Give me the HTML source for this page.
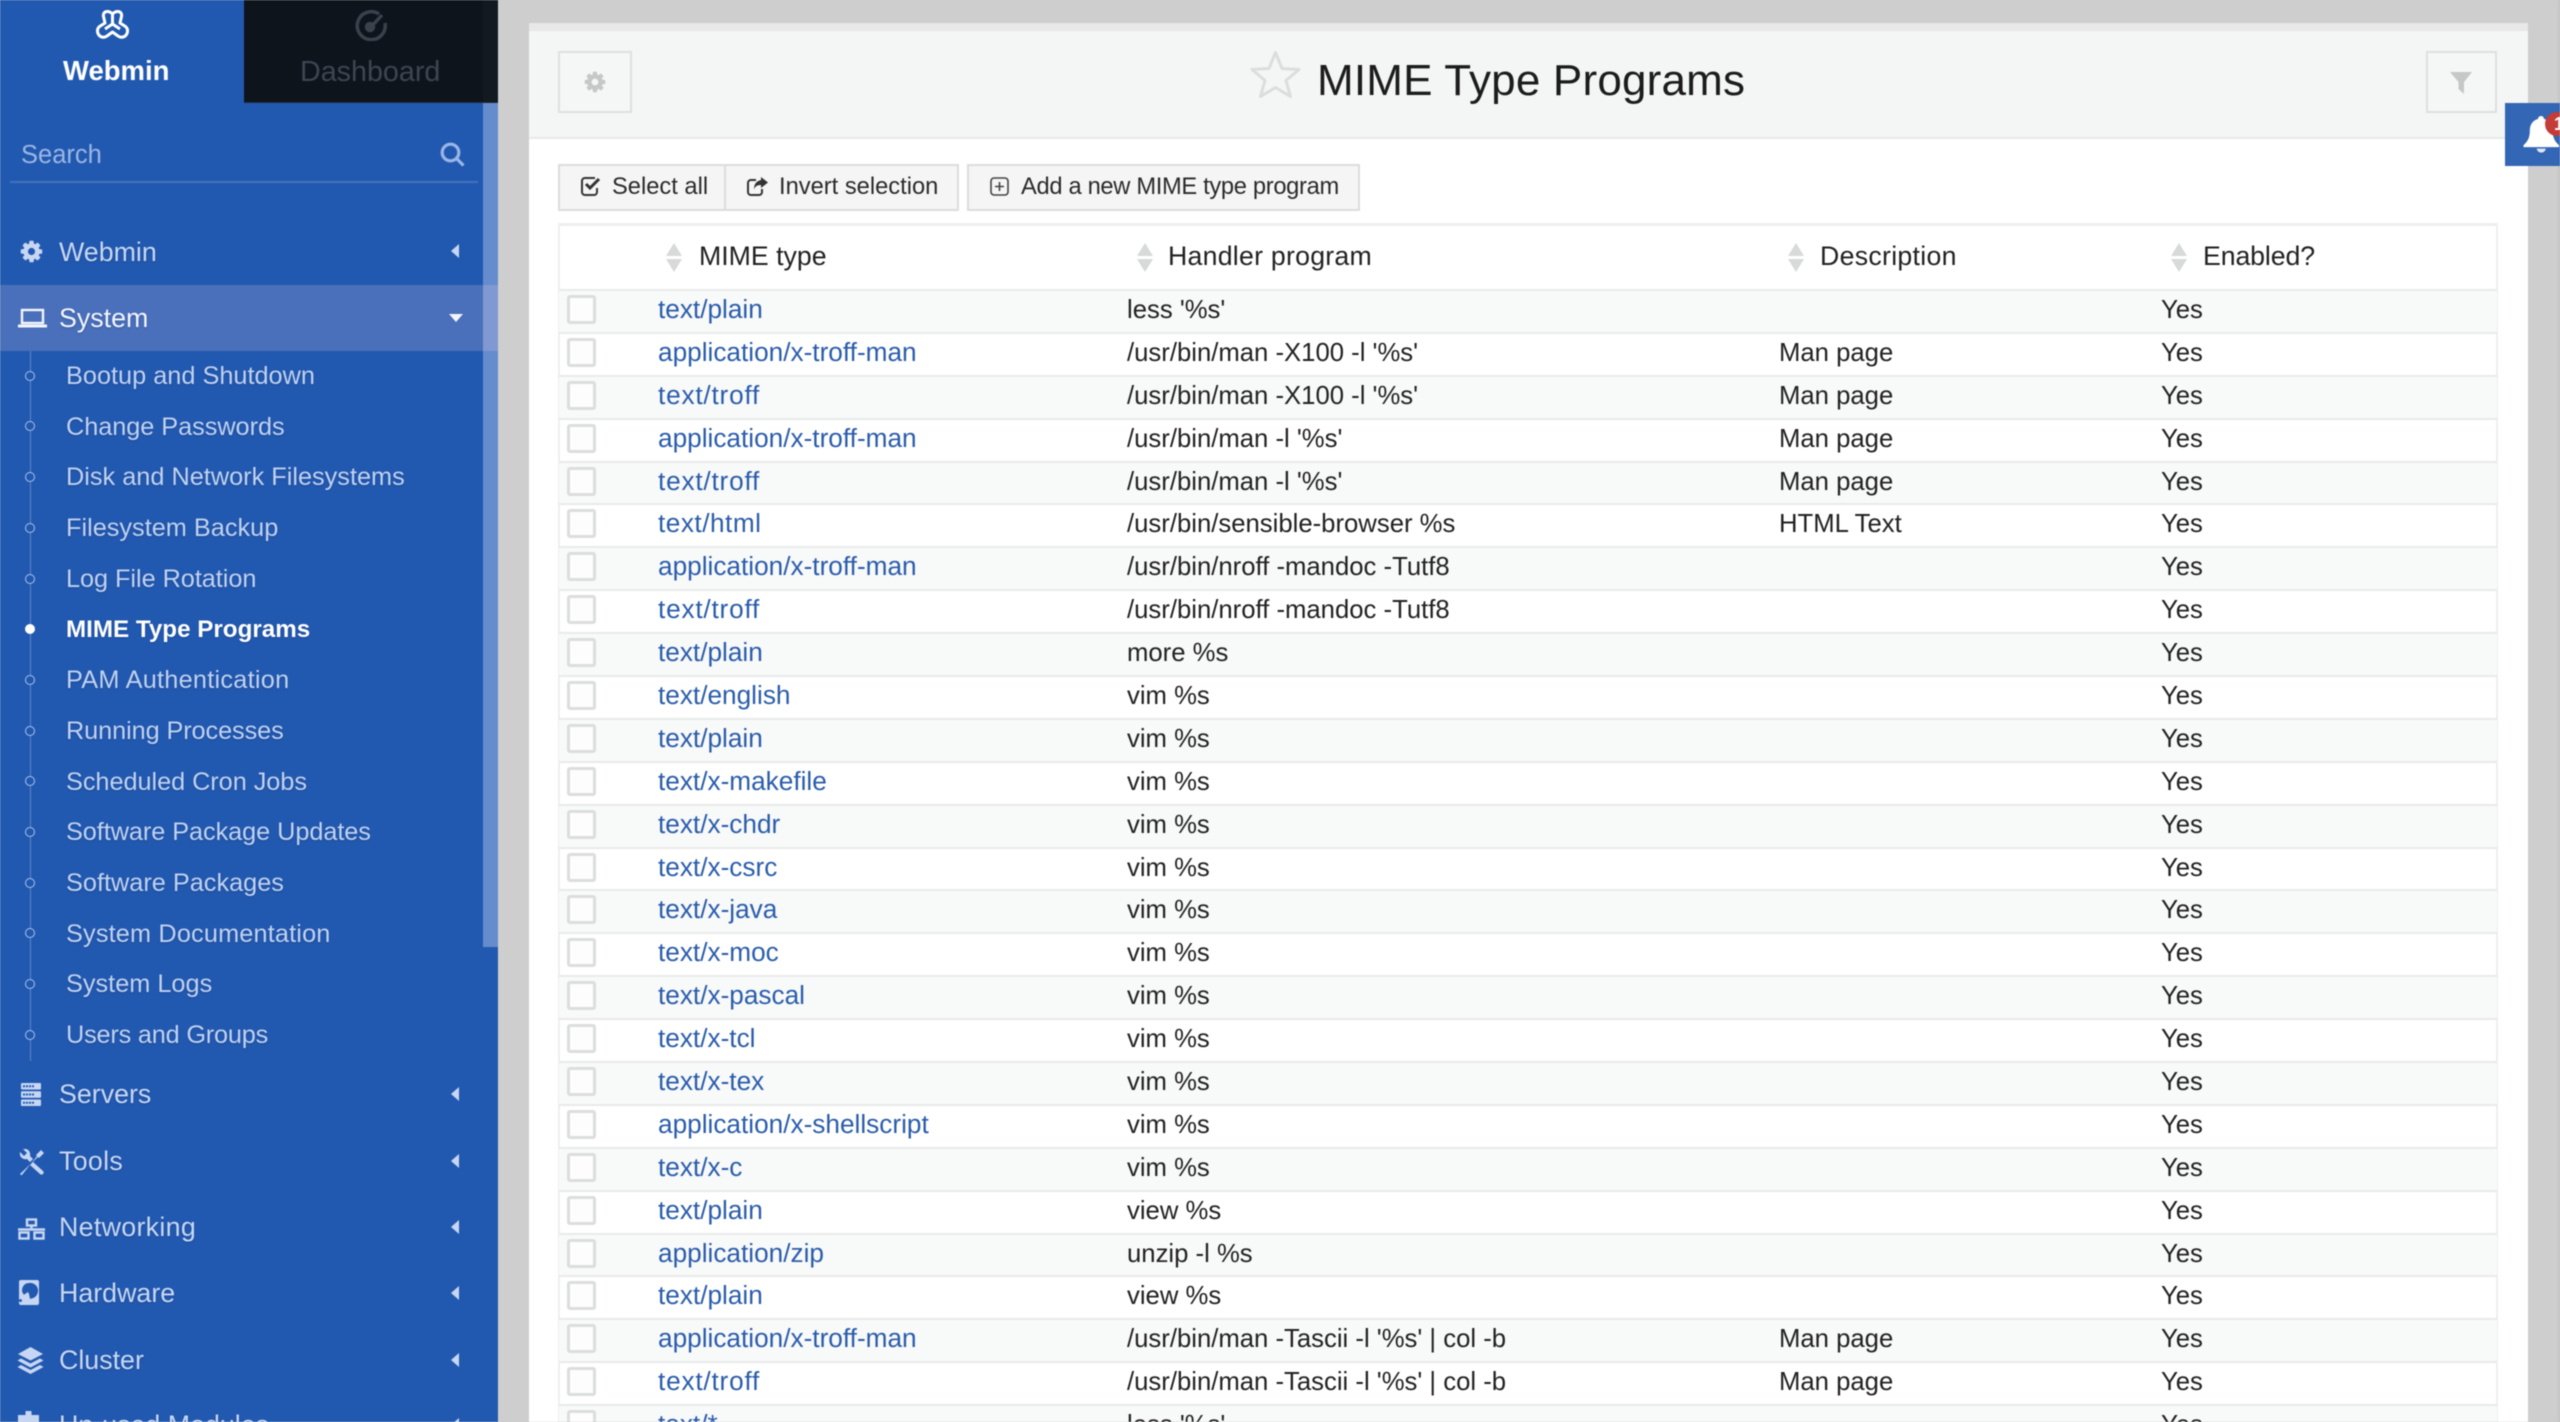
<!DOCTYPE html>
<html>
<head>
<meta charset="utf-8">
<style>
html,body{margin:0;padding:0;width:2560px;height:1422px;overflow:hidden;background:#cdcecd}
*{box-sizing:border-box}
#w{position:absolute;left:0;top:0;width:2560px;height:1422px;overflow:hidden;filter:blur(.45px);font-family:"Liberation Sans",sans-serif;background:#cdcecd}
.a{position:absolute;white-space:nowrap}
#side{position:absolute;left:0;top:0;width:498px;height:1422px;background:#2259b0;overflow:hidden}
#sb{position:absolute;left:483px;top:103px;width:15px;height:844px;background:#658ccd}
.mi{position:absolute;left:59px;font-size:26.8px;line-height:40px;height:40px;color:#c7d7f3;white-space:nowrap;text-shadow:0 1px 2px rgba(10,30,80,.25)}
.si{position:absolute;left:66px;font-size:25.3px;line-height:40px;height:40px;color:#c0d2f1;white-space:nowrap;text-shadow:0 1px 2px rgba(10,30,80,.25)}
.ic{position:absolute;fill:#c7d7f3}
.ar{position:absolute;left:451px;width:0;height:0;border-top:7px solid transparent;border-bottom:7px solid transparent;border-right:8px solid #c7d7f3}
.dot{position:absolute;left:25px;width:10px;height:10px;border-radius:50%;border:1.5px solid #a9c0ea;background:#2259b0}
#panel{position:absolute;left:529px;top:31px;width:1999px;height:1391px;background:#fff}
#top{position:absolute;left:529px;top:23px;width:1999px;height:8px;background:#e7e8e7}
#hdr{position:absolute;left:529px;top:31px;width:1999px;height:108px;background:#f4f5f5;border-bottom:2px solid #e8e9e9}
.bx{position:absolute;top:51px;height:62px;border:2px solid #dfe0e0;background:#f5f6f6}
.btn{position:absolute;top:164px;height:47px;background:#f5f5f5;border:2px solid #dcdcdc;font-size:23.7px;line-height:42px;color:#2b2b2b;white-space:nowrap}
#tb{position:absolute;left:558px;top:223px;width:1940px;height:1199px;border:2px solid #eeefef;border-top-width:3px;background:#fff}
.th{position:absolute;top:241px;font-size:26.7px;line-height:30px;color:#222;white-space:nowrap}
.so{position:absolute;top:243px;width:16px;height:29px}
#rows{position:absolute;left:559px;top:289px;width:1938px}
#rows div{position:relative;height:42.9px;border-top:2px solid #e9eaea;white-space:nowrap;font-size:25.7px;color:#222}
#rows div:nth-child(odd){background:#f8f9f9}
#rows i{position:absolute;left:8px;top:4px;width:29px;height:29px;border:3px solid #dcdddd;border-radius:3px;background:#fdfdfd}
#rows a,#rows b,#rows u,#rows s{position:absolute;top:0;line-height:39px;font-weight:normal;text-decoration:none}
#rows a{left:99px;color:#2a5cab;font-size:26.2px;line-height:37px}
#rows a.t{letter-spacing:.8px}
#rows a.h{letter-spacing:.5px}
#rows b{left:568px}
#rows u{left:1220px}
#rows s{left:1602px}
#bell{position:absolute;left:2505px;top:103px;width:55px;height:63px;background:#3366b4;overflow:hidden}
</style>
</head>
<body>
<div id="w">
<div id="panel"></div>
<div id="top"></div>
<div id="hdr"></div>
<div class="a" style="left:2558px;top:0;width:2px;height:1422px;background:#c4c5c4"></div>

<div class="bx" style="left:558px;width:74px"></div>
<svg class="a" style="left:583px;top:70px" width="24" height="24" viewBox="0 0 1792 1792" fill="#c6c7c7"><path d="M1152 896q0-106-75-181t-181-75-181 75-75 181 75 181 181 75 181-75 75-181zm512-109v222q0 12-8 23t-20 13l-185 28q-19 54-39 91 35 50 107 138 10 12 10 25t-9 23q-27 37-99 108t-94 71q-12 0-26-9l-138-108q-44 23-91 38-16 136-29 186-7 28-36 28h-222q-14 0-24.5-8.5t-11.5-21.5l-28-184q-49-16-90-37l-141 107q-10 9-25 9-14 0-25-11-126-114-165-168-7-10-7-23 0-12 8-23 15-21 51-66.5t54-70.5q-27-50-41-99l-183-27q-13-2-21-12.5t-8-23.5v-222q0-12 8-23t19-13l186-28q14-46 39-92-40-57-107-138-10-12-10-24 0-10 9-23 26-36 98.5-107.5t94.5-71.5q13 0 26 10l138 107q44-23 91-38 16-136 29-186 7-28 36-28h222q14 0 24.5 8.5t11.5 21.5l28 184q49 16 90 37l142-107q9-9 24-9 13 0 25 10 129 119 165 170 7 8 7 22 0 12-8 23-15 21-51 66.5t-54 70.5q26 50 41 98l183 28q13 2 21 12.5t8 23.5z"/></svg>
<svg class="a" style="left:1249px;top:49px" width="53" height="50" viewBox="0 0 53 50"><path d="M26.5 3.5 33 19.5 50 20.5 37 31.5 41.5 47.5 26.5 38.5 11.5 47.5 16 31.5 3 20.5 20 19.5Z" fill="none" stroke="#dcdddd" stroke-width="3" stroke-linejoin="round"/></svg>
<div class="a" style="left:1317px;top:54px;font-size:44px;letter-spacing:.2px;line-height:54px;color:#1c1c1c">MIME Type Programs</div>
<div class="bx" style="left:2426px;width:71px"></div>
<svg class="a" style="left:2449px;top:71px" width="24" height="24" viewBox="0 0 24 24" fill="#c6c7c7"><path d="M1 1H23L15 11V23L9.500 18V11Z"/></svg>

<div id="bell">
<svg class="a" style="left:18px;top:13px" width="37" height="37" viewBox="0 0 37 38" fill="#fff"><path d="M18 0c2 0 3 1.500 3 3 6 1.500 9 6 9 12 0 7 2 11 6.500 15v2H0v-2c4.500-4 6.500-8 6.500-15 0-6 3-10.500 8.500-12 0-1.500 1-3 3-3z"/><path d="M13.500 33.500a4.800 4.800 0 0 0 9.500 0z" fill="#dfe6f2"/></svg>
<div class="a" style="left:40px;top:9px;width:24px;height:24px;border-radius:50%;background:#c43c38;color:#fff;font-size:18px;font-weight:bold;line-height:24px;padding-left:9px">1</div>
</div>

<div class="btn" style="left:558px;width:168px;padding-left:52px">Select all</div>
<div class="btn" style="left:724px;width:235px;padding-left:53px">Invert selection</div>
<div class="btn" style="left:967px;width:393px;padding-left:52px;letter-spacing:-.32px">Add a new MIME type program</div>
<svg class="a" style="left:580px;top:176px" width="22" height="20" viewBox="0 0 22 20" fill="none" stroke="#333" stroke-width="2"><path d="M17 12v4a3 3 0 0 1-3 3H5a3 3 0 0 1-3-3V5a3 3 0 0 1 3-3h10"/><path d="M6 8l4 4 9-9" stroke-width="3"/></svg>
<svg class="a" style="left:747px;top:177px" width="22" height="20" viewBox="0 0 22 20" fill="none" stroke="#333" stroke-width="2"><path d="M15 12v3a3 3 0 0 1-3 3H4a3 3 0 0 1-3-3V6a3 3 0 0 1 3-3h5"/><path d="M14 0l7 5.500-7 5.500V8c-4 0-6 1.500-7 4.500 0-5 2-8.500 7-9.500z" fill="#333" stroke="none"/></svg>
<svg class="a" style="left:990px;top:176px" width="19" height="21" viewBox="0 0 19 21" fill="none" stroke="#444" stroke-width="1.600"><rect x="1" y="2" width="17" height="17" rx="3"/><path d="M9.500 6v9M5 10.500h9"/></svg>

<div id="tb"></div>
<svg class="so" style="left:666px" viewBox="0 0 16 29" fill="#d8d9d9"><path d="M8 0 16 13H0ZM0 16H16L8 29Z"/></svg>
<svg class="so" style="left:1137px" viewBox="0 0 16 29" fill="#d8d9d9"><path d="M8 0 16 13H0ZM0 16H16L8 29Z"/></svg>
<svg class="so" style="left:1788px" viewBox="0 0 16 29" fill="#d8d9d9"><path d="M8 0 16 13H0ZM0 16H16L8 29Z"/></svg>
<svg class="so" style="left:2171px" viewBox="0 0 16 29" fill="#d8d9d9"><path d="M8 0 16 13H0ZM0 16H16L8 29Z"/></svg>
<div class="th" style="left:699px">MIME type</div>
<div class="th" style="left:1168px;letter-spacing:.25px">Handler program</div>
<div class="th" style="left:1820px;letter-spacing:.3px">Description</div>
<div class="th" style="left:2203px;letter-spacing:-.1px">Enabled?</div>

<div id="rows">
<div><i></i><a>text/plain</a><b>less '%s'</b><s>Yes</s></div>
<div><i></i><a>application/x-troff-man</a><b>/usr/bin/man -X100 -l '%s'</b><u>Man page</u><s>Yes</s></div>
<div><i></i><a class="t">text/troff</a><b>/usr/bin/man -X100 -l '%s'</b><u>Man page</u><s>Yes</s></div>
<div><i></i><a>application/x-troff-man</a><b>/usr/bin/man -l '%s'</b><u>Man page</u><s>Yes</s></div>
<div><i></i><a class="t">text/troff</a><b>/usr/bin/man -l '%s'</b><u>Man page</u><s>Yes</s></div>
<div><i></i><a class="h">text/html</a><b>/usr/bin/sensible-browser %s</b><u>HTML Text</u><s>Yes</s></div>
<div><i></i><a>application/x-troff-man</a><b>/usr/bin/nroff -mandoc -Tutf8</b><s>Yes</s></div>
<div><i></i><a class="t">text/troff</a><b>/usr/bin/nroff -mandoc -Tutf8</b><s>Yes</s></div>
<div><i></i><a>text/plain</a><b>more %s</b><s>Yes</s></div>
<div><i></i><a>text/english</a><b>vim %s</b><s>Yes</s></div>
<div><i></i><a>text/plain</a><b>vim %s</b><s>Yes</s></div>
<div><i></i><a>text/x-makefile</a><b>vim %s</b><s>Yes</s></div>
<div><i></i><a>text/x-chdr</a><b>vim %s</b><s>Yes</s></div>
<div><i></i><a>text/x-csrc</a><b>vim %s</b><s>Yes</s></div>
<div><i></i><a>text/x-java</a><b>vim %s</b><s>Yes</s></div>
<div><i></i><a>text/x-moc</a><b>vim %s</b><s>Yes</s></div>
<div><i></i><a>text/x-pascal</a><b>vim %s</b><s>Yes</s></div>
<div><i></i><a>text/x-tcl</a><b>vim %s</b><s>Yes</s></div>
<div><i></i><a>text/x-tex</a><b>vim %s</b><s>Yes</s></div>
<div><i></i><a>application/x-shellscript</a><b>vim %s</b><s>Yes</s></div>
<div><i></i><a>text/x-c</a><b>vim %s</b><s>Yes</s></div>
<div><i></i><a>text/plain</a><b>view %s</b><s>Yes</s></div>
<div><i></i><a>application/zip</a><b>unzip -l %s</b><s>Yes</s></div>
<div><i></i><a>text/plain</a><b>view %s</b><s>Yes</s></div>
<div><i></i><a>application/x-troff-man</a><b>/usr/bin/man -Tascii -l '%s' | col -b</b><u>Man page</u><s>Yes</s></div>
<div><i></i><a class="t">text/troff</a><b>/usr/bin/man -Tascii -l '%s' | col -b</b><u>Man page</u><s>Yes</s></div>
<div><i></i><a>text/*</a><b>less '%s'</b><s>Yes</s></div>
</div>

<div id="side">
<div id="sb"></div>
<div class="a" style="left:0;top:285px;width:483px;height:66px;background:#4a70bb"></div>
<div class="a" style="left:483px;top:285px;width:15px;height:66px;background:#8099d2"></div>
<div class="a" style="left:244px;top:0;width:254px;height:103px;background:#0d141c;border-bottom:1px solid #222a35"></div>
<div class="a" style="left:483px;top:0;width:15px;height:103px;background:#121920;border-bottom:1px solid #222a35"></div>
<svg class="a" style="left:96px;top:10px" width="33" height="29" viewBox="0 0 33 29" fill="none" stroke="#fff" stroke-width="3" stroke-linejoin="round"><path d="M11.500 1.500C8 1.500 7 4 7.500 6.500L9 13 3.500 16.500C1 18.500 1 22 2.500 24.500 4.500 27.500 8 28 11 26L16.500 22 22 26C25 28 28.500 27.500 30.500 24.500 32 22 32 18.500 29.500 16.500L24 13 25.500 6.500C26 4 25 1.500 21.500 1.500 19 1.500 17.500 3 16.500 4 15.500 3 14 1.500 11.500 1.500Z"/><path d="M16.500 4V14L9 19M16.500 14 24 19"/></svg>
<div class="a" style="left:63px;top:54px;font-size:27.500px;font-weight:bold;line-height:34px;color:#fff">Webmin</div>
<svg class="a" style="left:354px;top:9px" width="34" height="32" viewBox="0 0 34 32" fill="none" stroke="#3a414c" stroke-width="3.500"><path d="M25 5A14 14 0 1 0 31 14"/><path d="M16 19 28 6" stroke-width="3.500"/><circle cx="16" cy="18" r="3.500" fill="#3a414c"/></svg>
<div class="a" style="left:300px;top:55px;font-size:28.700px;line-height:34px;color:#3d4551">Dashboard</div>

<div class="a" style="left:21px;top:137px;font-size:25.500px;line-height:36px;color:#9ab6e4">Search</div>
<svg class="a" style="left:440px;top:142px" width="25" height="25" viewBox="0 0 25 25" fill="none" stroke="#9ab6e4" stroke-width="3.200"><circle cx="10.500" cy="10.500" r="8.300"/><path d="M16.500 16.500 23.500 23.500"/></svg>
<div class="a" style="left:10px;top:181px;width:468px;height:2px;background:#4272bf"></div>

<svg class="ic" style="left:19px;top:239px" width="25" height="25" viewBox="0 0 1792 1792"><path d="M1152 896q0-106-75-181t-181-75-181 75-75 181 75 181 181 75 181-75 75-181zm512-109v222q0 12-8 23t-20 13l-185 28q-19 54-39 91 35 50 107 138 10 12 10 25t-9 23q-27 37-99 108t-94 71q-12 0-26-9l-138-108q-44 23-91 38-16 136-29 186-7 28-36 28h-222q-14 0-24.5-8.5t-11.5-21.5l-28-184q-49-16-90-37l-141 107q-10 9-25 9-14 0-25-11-126-114-165-168-7-10-7-23 0-12 8-23 15-21 51-66.5t54-70.5q-27-50-41-99l-183-27q-13-2-21-12.5t-8-23.5v-222q0-12 8-23t19-13l186-28q14-46 39-92-40-57-107-138-10-12-10-24 0-10 9-23 26-36 98.5-107.5t94.5-71.5q13 0 26 10l138 107q44-23 91-38 16-136 29-186 7-28 36-28h222q14 0 24.5 8.5t11.5 21.5l28 184q49 16 90 37l142-107q9-9 24-9 13 0 25 10 129 119 165 170 7 8 7 22 0 12-8 23-15 21-51 66.5t-54 70.5q26 50 41 98l183 28q13 2 21 12.5t8 23.5z"/></svg>
<div class="mi" style="top:231.500px">Webmin</div>
<div class="ar" style="top:244px"></div>
<svg class="a" style="left:18px;top:308px" width="29" height="20" viewBox="0 0 29 20" fill="none" stroke="#f3f6fc" stroke-width="2.400"><rect x="4" y="2" width="21" height="13"/><path d="M0 18H29" stroke-width="3"/></svg>
<div class="mi" style="top:298px;color:#f2f5fc">System</div>
<div class="a" style="left:449px;top:314px;width:0;height:0;border-left:7px solid transparent;border-right:7px solid transparent;border-top:8px solid #f2f5fc"></div>

<div class="a" style="left:29.500px;top:351px;width:1.500px;height:710px;background:#5c84c6"></div>
<div class="dot" style="top:371px"></div><div class="si" style="top:356px">Bootup and Shutdown</div>
<div class="dot" style="top:421px"></div><div class="si" style="top:407px;letter-spacing:-.05px">Change Passwords</div>
<div class="dot" style="top:472px"></div><div class="si" style="top:457px">Disk and Network Filesystems</div>
<div class="dot" style="top:523px"></div><div class="si" style="top:508px">Filesystem Backup</div>
<div class="dot" style="top:574px"></div><div class="si" style="top:558.500px;letter-spacing:-.05px">Log File Rotation</div>
<div class="dot" style="top:624px;background:#fff;border-color:#fff"></div><div class="si" style="top:610px;color:#fff;font-weight:bold;font-size:24.200px">MIME Type Programs</div>
<div class="dot" style="top:675px"></div><div class="si" style="top:660px;letter-spacing:.25px">PAM Authentication</div>
<div class="dot" style="top:726px"></div><div class="si" style="top:711px;letter-spacing:-.1px">Running Processes</div>
<div class="dot" style="top:776px"></div><div class="si" style="top:761.500px;letter-spacing:-.05px">Scheduled Cron Jobs</div>
<div class="dot" style="top:827px"></div><div class="si" style="top:812px;letter-spacing:-.07px">Software Package Updates</div>
<div class="dot" style="top:878px"></div><div class="si" style="top:863px">Software Packages</div>
<div class="dot" style="top:928px"></div><div class="si" style="top:914px;letter-spacing:.15px">System Documentation</div>
<div class="dot" style="top:979px"></div><div class="si" style="top:964px">System Logs</div>
<div class="dot" style="top:1030px"></div><div class="si" style="top:1015px;letter-spacing:-.2px">Users and Groups</div>

<svg class="ic" style="left:21px;top:1083px" width="20" height="23" viewBox="0 0 20 23"><path d="M1 0h18a1 1 0 0 1 1 1v4.500a1 1 0 0 1-1 1H1a1 1 0 0 1-1-1V1a1 1 0 0 1 1-1zm0 8.300h18a1 1 0 0 1 1 1v4.400a1 1 0 0 1-1 1H1a1 1 0 0 1-1-1V9.300a1 1 0 0 1 1-1zM1 16.500h18a1 1 0 0 1 1 1V22a1 1 0 0 1-1 1H1a1 1 0 0 1-1-1v-4.500a1 1 0 0 1 1-1z"/><path d="M2 3.300H14M2 11.500H14M2 19.800H14" stroke="#2259b0" stroke-width="2" stroke-dasharray="2 1" fill="none"/></svg>
<div class="mi" style="top:1074px">Servers</div><div class="ar" style="top:1087px"></div>
<svg class="ic" style="left:19px;top:1149px" width="26" height="26" viewBox="0 0 26 26"><path d="M1 25 19 8l-2-2 5-5 3 3-5 5-2-2L2.500 26.500z"/><path d="M14 13 24 22a2 2 0 0 1-3 3L11 16z"/><path d="M1 3l4 4 3-3-4-4c4-1 8 2 7 7l3 3-3 3-3-3c-4 1-8-2-7-7z"/></svg>
<div class="mi" style="top:1140.500px;letter-spacing:.3px">Tools</div><div class="ar" style="top:1154px"></div>
<svg class="a" style="left:18px;top:1218px" width="27" height="22" viewBox="0 0 27 22" fill="none" stroke="#c7d7f3" stroke-width="2.400"><rect x="9" y="1.500" width="9" height="6"/><rect x="1.500" y="14.500" width="9" height="6"/><rect x="16.500" y="14.500" width="9" height="6"/><path d="M13.500 7.500V11M0 11.500H27"/></svg>
<div class="mi" style="top:1207px;letter-spacing:.3px">Networking</div><div class="ar" style="top:1220px"></div>
<svg class="ic" style="left:19px;top:1280px" width="20" height="25" viewBox="0 0 20 25"><path fill-rule="evenodd" d="M2 0h16a2 2 0 0 1 2 2v21a2 2 0 0 1-2 2H2a2 2 0 0 1-2-2V2a2 2 0 0 1 2-2zm8 3a7 7 0 0 0-5 11.800L9 12l1 2 1 5 1.500-.5A7 7 0 0 0 10 3zM3 20.500a1.500 1.500 0 1 0 0 .1z"/></svg>
<div class="mi" style="top:1273px">Hardware</div><div class="ar" style="top:1286px"></div>
<svg class="ic" style="left:17px;top:1347px" width="27" height="27" viewBox="0 0 27 27"><path d="M13.500 0 26 7 13.500 13.500 1 7ZM4 11.500l9.500 5 9.500-5 3.500 2-13 7-13-7ZM4 18l9.500 5 9.500-5 3.500 2-13 7-13-7Z"/></svg>
<div class="mi" style="top:1340px">Cluster</div><div class="ar" style="top:1353px"></div>
<svg class="ic" style="left:18px;top:1411px" width="21" height="14" viewBox="0 0 21 14"><path d="M7.500 0h6v4h7.500v10H0V4h7.500z"/></svg>
<div class="mi" style="top:1405px">Un-used Modules</div><div class="ar" style="top:1418px"></div>
</div>
</div>
</body>
</html>
